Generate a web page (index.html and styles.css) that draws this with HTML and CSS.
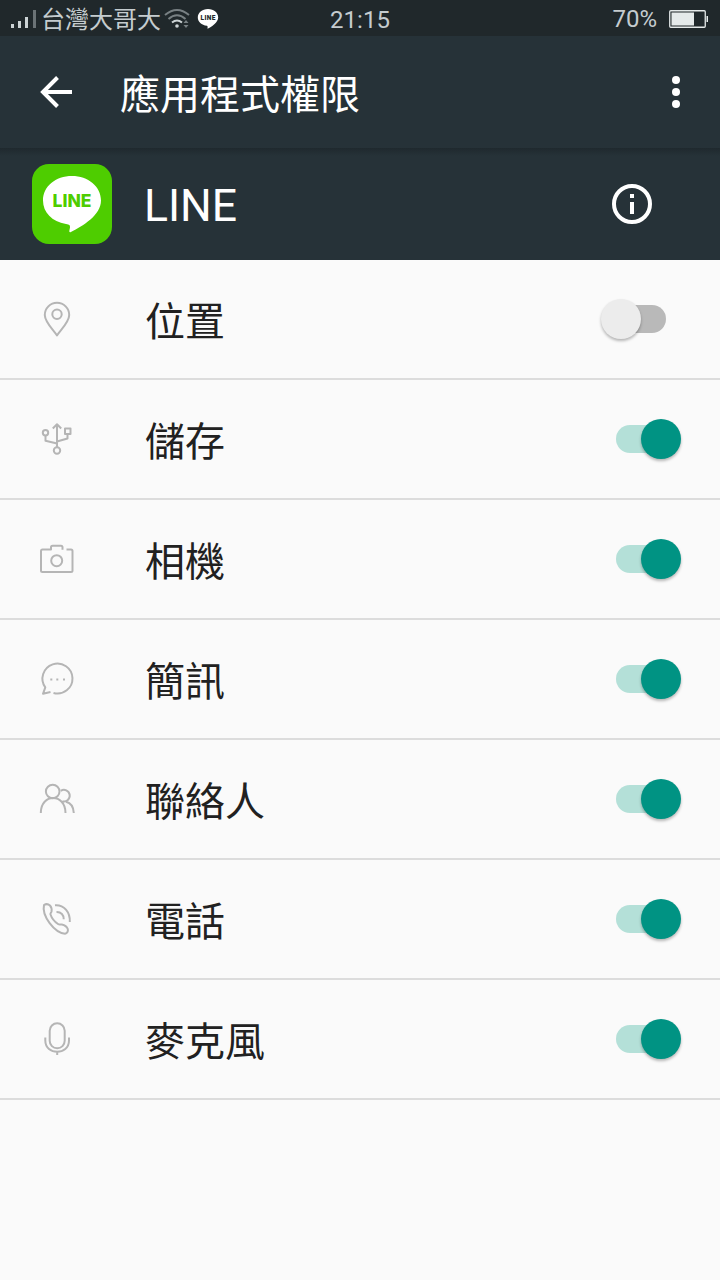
FILE: index.html
```html
<!DOCTYPE html>
<html lang="zh-Hant">
<head>
    <meta charset="UTF-8">
    <meta name="viewport" content="width=device-width, initial-scale=1.0">
    <title>應用程式權限</title>
    <link rel="stylesheet" href="styles.css">
</head>
<body>
    <div class="status-bar">
        <div class="status-left">
            <svg class="signal" width="28" height="20" viewBox="0 0 28 20">
                <path d="M1 15h3v4H1zM8 12h3v7H8zM15 8h3v11h-3z" fill="#ccd3d5"/>
                <path d="M23 1h3v18h-3z" fill="#6b7376"/>
            </svg>
            <span class="carrier">台灣大哥大</span>
            <svg class="wifi" width="26" height="22" viewBox="0 0 26 22" fill="none" stroke-width="2">
                <path d="M1 7Q13-3 25 7M4.500 11Q13 3.500 21.500 11" stroke="#788083"/>
                <path d="M8 14.500Q13 10.500 18 14.500" stroke="#ccd3d5"/>
                <circle cx="13" cy="18" r="1.800" fill="#ccd3d5"/>
                <path d="M19.500 15l2.500-3 2.500 3zM19.500 17l2.500 3 2.500-3z" fill="#788083"/>
            </svg>
            <svg class="line-badge" width="22" height="22" viewBox="0 0 22 22">
                <path d="M11 1C5 1 .8 4.700.8 9.500c0 4.300 3.600 7.500 9.200 8.300.9.200.6 1.800.5 3C14.500 19 21.200 14.500 21.200 9.500 21.200 4.700 17 1 11 1z" fill="#fff"/>
                <text x="11" y="12" text-anchor="middle" textLength="15" class="badge-text">LINE</text>
            </svg>
        </div>
        <div class="clock">21:15</div>
        <div class="status-right">
            <span>70%</span>
            <svg width="40" height="20" viewBox="0 0 40 20">
                <rect x=".75" y="1.750" width="35.500" height="16.500" rx="1" fill="none" stroke="#e5eaea" stroke-width="1.300"/>
                <path d="M2.500 3.500H25v13H2.500zM37.500 7H39v6h-1.500z" fill="#e5eaea"/>
            </svg>
        </div>
    </div>

    <div class="toolbar">
        <svg class="back" width="34" height="34" viewBox="0 0 34 34" fill="none" stroke="#fff" stroke-width="4">
            <path d="M33 17H4M18.500 2.500L4 17l14.500 14.500"/>
        </svg>
        <h1>應用程式權限</h1>
        <svg class="menu" width="8" height="34" viewBox="0 0 8 34" fill="#fff">
            <circle cx="4" cy="5" r="4"/>
            <circle cx="4" cy="17" r="4"/>
            <circle cx="4" cy="29" r="4"/>
        </svg>
    </div>

    <div class="app-header">
        <svg class="app-icon" width="80" height="80" viewBox="0 0 80 80">
            <rect width="80" height="80" rx="17" fill="#4ecd00"/>
            <path d="M40 12C23.500 12 11 22.500 11 36.500 11 48.500 20 57.500 34 60c3.500.6 4.200 1 4 3.500l-.7 3.500c-.2 1.200.6 1.500 1.700.9C51 62 69 51 69 36.500 69 22.500 56 12 40 12z" fill="#fff"/>
            <text x="40" y="43" text-anchor="middle" textLength="39" class="logo-text">LINE</text>
        </svg>
        <h2>LINE</h2>
        <svg class="info" width="40" height="40" viewBox="0 0 40 40">
            <circle cx="20" cy="20" r="18" fill="none" stroke="#fff" stroke-width="4"/>
            <path d="M18 10h4v4h-4zM18 18h4v12h-4z" fill="#fff"/>
        </svg>
    </div>

    <div class="permissions">
        <div class="row">
            <svg class="icon" viewBox="0 0 60 60">
                <path d="M27 45.500C23 39.500 14.800 32 14.800 25a12.200 12.200 0 0 1 24.400 0C39.200 32 31 39.500 27 45.500z"/>
                <circle cx="27" cy="24.300" r="4.700"/>
            </svg>
            <span class="label">位置</span>
            <div class="switch"><div class="thumb"></div></div>
        </div>
        <div class="row">
            <svg class="icon" viewBox="0 0 60 60">
                <path d="M27 37V14.500M22.800 18.500l4.200-4.300 4.200 4.300M15.500 25.500v5.300L27 33.500M37.500 23.500v5L27 31.500"/>
                <circle cx="15.500" cy="22.800" r="2.700"/>
                <circle cx="27" cy="40.500" r="3.200"/>
                <path d="M35 18.500h5.500V24H35z"/>
            </svg>
            <span class="label">儲存</span>
            <div class="switch on"><div class="thumb"></div></div>
        </div>
        <div class="row">
            <svg class="icon" viewBox="0 0 60 60">
                <path d="M36.500 19.500H41Q42.500 19.500 42.500 21V40.500Q42.500 42 41 42H12.500Q11 42 11 40.500V21Q11 19.500 12.500 19.500H21v-2.200q0-1.500 1.500-1.500h8.500q1.500 0 1.500 1.500v2.500"/>
                <circle cx="26.700" cy="30.700" r="5.500"/>
            </svg>
            <span class="label">相機</span>
            <div class="switch on"><div class="thumb"></div></div>
        </div>
        <div class="row">
            <svg class="icon" viewBox="0 0 60 60">
                <path d="M20.500 42L13 43.800l2.300-6.500A15 15 0 1 1 23.500 43"/>
                <path d="M20.300 29.500h2M26.300 29.500h2M33 29.500h2"/>
            </svg>
            <span class="label">簡訊</span>
            <div class="switch on"><div class="thumb"></div></div>
        </div>
        <div class="row">
            <svg class="icon" viewBox="0 0 60 60">
                <circle cx="22.700" cy="21.500" r="6.800"/>
                <path d="M10.800 43C10.800 23 35.500 23 35.500 43M30.800 20.800A5.800 5.800 0 1 1 32.500 31.300M36 31.800C41 33 43.500 37 43.800 43"/>
            </svg>
            <span class="label">聯絡人</span>
            <div class="switch on"><div class="thumb"></div></div>
        </div>
        <div class="row">
            <svg class="icon" viewBox="0 0 60 60">
                <path d="M14 15c2-1.300 4.500-.8 6 .5 1.300 1.500 1.800 4.500 1.500 6-.3 1.300-1.500 1.800-1 3 1 3 4.500 7.500 7.500 9.500 1.500 1 2.300.2 3.800.5 2.500.5 5.200 2.500 6 4.500.5 2-.5 4.500-2.800 4.700C24.500 42.500 11.500 26 14 15z"/>
                <path d="M25 15.200C34 14.500 40.300 22 39.800 32M26.500 22c4.500-.2 7.500 3 7.200 7.300"/>
            </svg>
            <span class="label">電話</span>
            <div class="switch on"><div class="thumb"></div></div>
        </div>
        <div class="row">
            <svg class="icon" viewBox="0 0 60 60">
                <rect x="19.700" y="13.300" width="15" height="25" rx="7.500"/>
                <path d="M15.300 27.500v3c0 15 23.700 15 23.700 0v-3M27.200 41.500V45"/>
            </svg>
            <span class="label">麥克風</span>
            <div class="switch on"><div class="thumb"></div></div>
        </div>
    </div>
</body>
</html>
```

FILE: styles.css
```css
* {
    box-sizing: border-box;
}
body {
    margin: 0;
    min-height: 1280px;
    background-color: #fafafa;
    color: #212121;
    font-family: Roboto, "Noto Sans CJK TC", sans-serif;
}
svg {
    display: block;
    flex-shrink: 0;
}
.status-bar {
    display: grid;
    grid-template-columns: 1fr auto 1fr;
    align-items: center;
    height: 36px;
    padding: 0 11px 0 10px;
    background-color: #20282b;
    color: #c5cccf;
    font-size: 24px;
    line-height: 36px;
}
.clock {
    padding: 2px 0 0 1px;
}
.status-left,
.status-right {
    display: flex;
    align-items: center;
}
.status-right {
    justify-content: flex-end;
    gap: 12px;
}
.carrier {
    margin-left: 3px;
    padding-top: 2px;
    white-space: nowrap;
}
.wifi {
    margin-left: 3px;
}
.line-badge {
    margin-left: 7px;
}
.badge-text {
    font-size: 6.5px;
    font-weight: 900;
    fill: #20282b;
}
.toolbar {
    display: flex;
    align-items: center;
    height: 112px;
    padding: 0 40px 0 39px;
    background-color: #263238;
    color: #fff;
}
h1 {
    margin: 0 auto 0 47px;
    padding-top: 7px;
    font-size: 40px;
    font-weight: 400;
    line-height: 60px;
}
.app-header {
    display: flex;
    align-items: center;
    height: 112px;
    padding: 0 68px 0 32px;
    background: linear-gradient(#1f292e, #263238 8px);
    color: #fff;
}
h2 {
    margin: 4px auto 0 32px;
    font-size: 44.5px;
    font-weight: 400;
}
.logo-text {
    font-family: Inter, sans-serif;
    font-size: 17.5px;
    font-weight: 800;
    fill: #4ecd00;
}
.row {
    display: flex;
    align-items: center;
    height: 120px;
    padding: 0 39px 0 30px;
    border-bottom: 2px solid #dcdcdc;
}
.icon {
    width: 60px;
    height: 60px;
    margin-top: 2px;
    fill: none;
    stroke: #b5b5b5;
    stroke-width: 2;
    stroke-linejoin: round;
}
.label {
    margin: 7px auto 0 55px;
    font-size: 40px;
    line-height: 60px;
}
.switch {
    position: relative;
    width: 80px;
    height: 40px;
    padding: 6px 15px;
}
.switch::before {
    content: '';
    display: block;
    height: 28px;
    border-radius: 14px;
    background-color: #b9b9b9;
}
.thumb {
    position: absolute;
    top: 0;
    left: 0;
    width: 40px;
    height: 40px;
    border-radius: 50%;
    background-color: #ececec;
    box-shadow: 0 2px 3px rgba(0,0,0,0.28);
}
.on::before {
    background-color: #b4e0d8;
}
.on .thumb {
    left: 40px;
    background-color: #009383;
}
```
